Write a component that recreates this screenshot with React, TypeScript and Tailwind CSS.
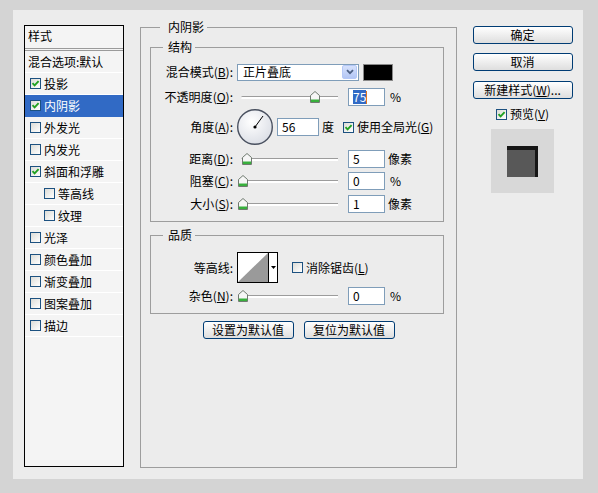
import React from 'react';

const items = [
  { t: '投影', c: true },
  { t: '内阴影', c: true, sel: true },
  { t: '外发光', c: false },
  { t: '内发光', c: false },
  { t: '斜面和浮雕', c: true },
  { t: '等高线', c: false, sub: true },
  { t: '纹理', c: false, sub: true },
  { t: '光泽', c: false },
  { t: '颜色叠加', c: false },
  { t: '渐变叠加', c: false },
  { t: '图案叠加', c: false },
  { t: '描边', c: false },
];

function Check({ checked }: { checked: boolean }) {
  return (
    <span className="flex h-[11px] w-[11px] shrink-0 items-center justify-center border border-[#1c5180] bg-linear-to-br from-[#dcdcd7] to-white">
      {checked && (
        <svg width="9" height="9" viewBox="0 0 9 9">
          <path d="M1.5 4.2 L3.6 6.4 L7.6 2.2" stroke="#21a121" strokeWidth="1.9" fill="none" />
        </svg>
      )}
    </span>
  );
}

function Lbl({ t, k }: { t: string; k?: string }) {
  return (
    <span className="whitespace-nowrap">
      {t}
      {k && (
        <>
          (<u>{k}</u>)
        </>
      )}
      :
    </span>
  );
}

function Slider({ pos }: { pos: number }) {
  return (
    <div className="relative h-[12px] w-[100px] shrink-0">
      <div className="absolute left-[3px] right-0 top-[5px] h-[3px] rounded-l-full border-t border-[#9c9c9c] bg-white" />
      <svg className="absolute top-0" style={{ left: pos }} width="10" height="12" viewBox="0 0 10 12">
        <path d="M0.5 4.5 L5 0.5 L9.5 4.5 V11.5 H0.5 Z" fill="#f6f6f6" stroke="#6f7a6f" />
        <rect x="1" y="8.5" width="8" height="2.5" fill="#38b03c" />
      </svg>
    </div>
  );
}

function Field({ children, w = 'w-[37px]' }: { children: React.ReactNode; w?: string }) {
  return (
    <div className={`flex h-[18px] ${w} shrink-0 items-center border border-[#7f9db9] bg-white pl-[4px] leading-[14px]`}>
      {children}
    </div>
  );
}

function XpButton({ children, w }: { children: React.ReactNode; w: string }) {
  return (
    <button className={`flex h-[18px] ${w} items-center justify-center rounded-[3px] border border-[#003c74] bg-linear-to-b from-white to-[#dedede] leading-[14px] text-black`}>
      {children}
    </button>
  );
}

export default function App() {
  return (
    <div className="h-[493px] w-[598px] bg-[#d4d4d4] pl-[13px] pt-[10px] font-['Noto_Sans_CJK_SC',sans-serif] text-[12px] text-black">
      <div className="flex h-[469px] w-[570px] bg-[#ececec] pl-[11px] pt-[15px]">
        {/* style list */}
        <div className="h-[442px] w-[100px] shrink-0 border border-black bg-[#f4f4f4]">
          <div className="flex h-[25px] items-center border-b-[3px] border-double border-[#9a9a9a] pb-[2px] pl-[3px]">样式</div>
          <div className="flex h-[22px] items-center border-b border-white pl-[3px]">混合选项:默认</div>
          {items.map((it) => (
            <div
              key={it.t}
              className={`flex h-[22px] items-center gap-[3px] border-b ${it.sel ? 'border-[#316ac5] bg-[#316ac5] text-white' : 'border-white'} ${it.sub ? 'pl-[19px]' : 'pl-[5px]'}`}
            >
              <Check checked={it.c} />
              <span>{it.t}</span>
            </div>
          ))}
        </div>

        {/* inner shadow panel */}
        <fieldset className="ml-[16px] mt-[-5px] h-[448px] w-[317px] shrink-0 border border-[#9d9d9d] px-[9px]">
          <legend className="ml-[10px] pl-[8px] pr-[3px] leading-[14px]">内阴影</legend>

          <fieldset className="mt-[6px] w-[294px] border border-[#9d9d9d] pb-[7px]">
            <legend className="ml-[12px] pl-[5px] pr-[3px] leading-[14px]">结构</legend>

            <div className="mt-[8px] flex h-[20px] items-center">
              <div className="w-[82px] text-right"><Lbl t="混合模式" k="B" /></div>
              <div className="ml-[4px] flex h-[17px] w-[122px] items-center justify-between border border-[#7f9db9] bg-white pl-[5px] pr-[1px]">
                <span className="leading-[14px]">正片叠底</span>
                <span className="flex h-[14px] w-[15px] items-center justify-center rounded-[2px] border border-[#b5c8f7] bg-linear-to-b from-[#d6e1fc] to-[#b3c6f4]">
                  <svg width="8" height="6" viewBox="0 0 8 6">
                    <path d="M1 1.2 L4 4.2 L7 1.2" stroke="#4d6185" strokeWidth="1.8" fill="none" />
                  </svg>
                </span>
              </div>
              <div className="ml-[4px] h-[17px] w-[30px] border border-[#8a8a8a] bg-black" />
            </div>

            <div className="mt-[5px] flex h-[20px] items-center">
              <div className="w-[82px] text-right"><Lbl t="不透明度" k="O" /></div>
              <div className="ml-[5px]"><Slider pos={72} /></div>
              <div className="ml-[10px]">
                <Field>
                  <span className="bg-[#316ac5] text-white">75</span>
                  <span className="h-[13px] w-[1px] bg-[#e07a1f]" />
                </Field>
              </div>
              <span className="ml-[5px]">%</span>
            </div>

            <div className="mt-[1px] flex h-[38px] items-center">
              <div className="w-[82px] text-right"><Lbl t="角度" k="A" /></div>
              <svg className="ml-[3px] shrink-0" width="38" height="38" viewBox="0 0 38 38">
                <defs>
                  <radialGradient id="dial" cx="40%" cy="35%" r="65%">
                    <stop offset="0" stopColor="#ffffff" />
                    <stop offset="1" stopColor="#dde0e7" />
                  </radialGradient>
                </defs>
                <circle cx="19" cy="19" r="17.3" fill="url(#dial)" stroke="#4a5160" strokeWidth="1.4" />
                <line x1="19" y1="19" x2="27" y2="8" stroke="#000" strokeWidth="1" />
                <circle cx="19" cy="19" r="1.6" fill="#000" />
              </svg>
              <div className="ml-[3px]"><Field w="w-[42px]">56</Field></div>
              <span className="ml-[3px]">度</span>
              <span className="ml-[9px]"><Check checked /></span>
              <span className="ml-[3px]">使用全局光(<u>G</u>)</span>
            </div>

            <div className="mt-[3px] flex h-[20px] items-center">
              <div className="w-[82px] text-right"><Lbl t="距离" k="D" /></div>
              <div className="ml-[5px]"><Slider pos={4} /></div>
              <div className="ml-[10px]"><Field>5</Field></div>
              <span className="ml-[3px]">像素</span>
            </div>

            <div className="mt-[2px] flex h-[20px] items-center">
              <div className="w-[82px] text-right"><Lbl t="阻塞" k="C" /></div>
              <div className="ml-[5px]"><Slider pos={0} /></div>
              <div className="ml-[10px]"><Field>0</Field></div>
              <span className="ml-[5px]">%</span>
            </div>

            <div className="mt-[3px] flex h-[20px] items-center">
              <div className="w-[82px] text-right"><Lbl t="大小" k="S" /></div>
              <div className="ml-[5px]"><Slider pos={0} /></div>
              <div className="ml-[10px]"><Field>1</Field></div>
              <span className="ml-[3px]">像素</span>
            </div>
          </fieldset>

          <fieldset className="mt-[6px] w-[294px] border border-[#9d9d9d] pb-[8px]">
            <legend className="ml-[12px] pl-[5px] pr-[3px] leading-[14px]">品质</legend>

            <div className="mt-[10px] flex h-[31px] items-center">
              <div className="w-[82px] text-right">等高线:</div>
              <div className="ml-[4px] flex h-[31px] w-[41px] border border-black bg-white">
                <svg width="30" height="29" viewBox="0 0 30 29">
                  <polygon points="0,29 30,0 30,29" fill="#9a9a9a" />
                </svg>
                <div className="flex flex-1 items-center justify-center border-l border-black">
                  <svg width="5" height="3" viewBox="0 0 5 3">
                    <polygon points="0,0 5,0 2.5,3" fill="#000" />
                  </svg>
                </div>
              </div>
              <span className="ml-[14px]"><Check checked={false} /></span>
              <span className="ml-[3px]">消除锯齿(<u>L</u>)</span>
            </div>

            <div className="mt-[4px] flex h-[18px] items-center">
              <div className="w-[82px] text-right"><Lbl t="杂色" k="N" /></div>
              <div className="ml-[5px]"><Slider pos={0} /></div>
              <div className="ml-[10px]"><Field>0</Field></div>
              <span className="ml-[5px]">%</span>
            </div>
          </fieldset>

          <div className="mt-[7px] flex justify-center gap-[10px]">
            <XpButton w="w-[91px]">设置为默认值</XpButton>
            <XpButton w="w-[91px]">复位为默认值</XpButton>
          </div>
        </fieldset>

        {/* right column */}
        <div className="ml-[15px] flex w-[101px] shrink-0 flex-col items-center">
          <div className="mt-[1px]"><XpButton w="w-[100px]">确定</XpButton></div>
          <div className="mt-[9px]"><XpButton w="w-[100px]">取消</XpButton></div>
          <div className="mt-[10px]"><XpButton w="w-[100px]">新建样式(<u>W</u>)...</XpButton></div>
          <div className="mt-[7px] flex h-[16px] items-center gap-[3px]">
            <Check checked />
            <span>预览(<u>V</u>)</span>
          </div>
          <div className="mt-[7px] flex h-[64px] w-[63px] items-center justify-center bg-[#d8d8d8]">
            <div className="flex h-[31px] w-[31px] items-end bg-[#161616]">
              <div className="h-[27px] w-[28px] bg-[#585858]" />
            </div>
          </div>
        </div>
      </div>
    </div>
  );
}
